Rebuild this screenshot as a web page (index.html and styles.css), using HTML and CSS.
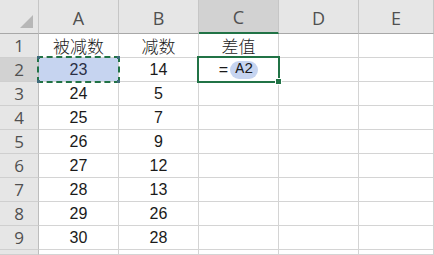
FILE: index.html
```html
<!DOCTYPE html>
<html lang="zh">
<head>
  <meta charset="UTF-8">
  <title>差值</title>
  <link rel="stylesheet" href="styles.css">
</head>
<body>
  <div class="sheet">
    <div class="corner"></div>
    <div class="col-head">A</div>
    <div class="col-head">B</div>
    <div class="col-head active">C</div>
    <div class="col-head">D</div>
    <div class="col-head">E</div>

    <div class="row-head">1</div>
    <div class="cell cjk">被减数</div>
    <div class="cell cjk">减数</div>
    <div class="cell cjk">差值</div>
    <div class="cell"></div>
    <div class="cell"></div>

    <div class="row-head active">2</div>
    <div class="cell copied">23<span class="marquee"><i class="dot tl"></i><i class="dot tr"></i><i class="dot bl"></i><i class="dot br"></i></span></div>
    <div class="cell">14</div>
    <div class="cell editing">=<span class="ref">A2</span><span class="selection"><span class="handle"></span></span></div>
    <div class="cell"></div>
    <div class="cell"></div>

    <div class="row-head">3</div>
    <div class="cell">24</div>
    <div class="cell">5</div>
    <div class="cell"></div>
    <div class="cell"></div>
    <div class="cell"></div>

    <div class="row-head">4</div>
    <div class="cell">25</div>
    <div class="cell">7</div>
    <div class="cell"></div>
    <div class="cell"></div>
    <div class="cell"></div>

    <div class="row-head">5</div>
    <div class="cell">26</div>
    <div class="cell">9</div>
    <div class="cell"></div>
    <div class="cell"></div>
    <div class="cell"></div>

    <div class="row-head">6</div>
    <div class="cell">27</div>
    <div class="cell">12</div>
    <div class="cell"></div>
    <div class="cell"></div>
    <div class="cell"></div>

    <div class="row-head">7</div>
    <div class="cell">28</div>
    <div class="cell">13</div>
    <div class="cell"></div>
    <div class="cell"></div>
    <div class="cell"></div>

    <div class="row-head">8</div>
    <div class="cell">29</div>
    <div class="cell">26</div>
    <div class="cell"></div>
    <div class="cell"></div>
    <div class="cell"></div>

    <div class="row-head">9</div>
    <div class="cell">30</div>
    <div class="cell">28</div>
    <div class="cell"></div>
    <div class="cell"></div>
    <div class="cell"></div>

    <div class="row-head"></div>
    <div class="cell"></div>
    <div class="cell"></div>
    <div class="cell"></div>
    <div class="cell"></div>
    <div class="cell"></div>
  </div>
</body>
</html>
```

FILE: styles.css
```css
html, body {
  margin: 0;
  padding: 0;
  background-color: #fff;
  overflow: hidden;
}
.sheet {
  display: grid;
  grid-template-columns: 39px repeat(4, 80px) 1fr;
  grid-template-rows: 34px repeat(9, 24px) 1fr;
  width: 434px;
  height: 255px;
  font-family: "Liberation Sans", "Noto Sans CJK SC", sans-serif;
}
.corner,
.col-head,
.row-head {
  box-sizing: border-box;
  background-color: #e6e6e6;
  color: #505050;
  display: flex;
  align-items: center;
  justify-content: center;
}
.corner {
  position: relative;
  border-right: 1px solid #c6c6c6;
  border-bottom: 1px solid #a8a8a8;
}
.corner::after {
  content: "";
  position: absolute;
  right: 5px;
  bottom: 5px;
  width: 0;
  height: 0;
  border-left: 13px solid transparent;
  border-bottom: 13px solid #b7b7b7;
}
.col-head {
  font-family: "Open Sans", "Liberation Sans", sans-serif;
  font-size: 18px;
  border-right: 1px solid #c6c6c6;
  border-bottom: 1px solid #a8a8a8;
  padding-top: 2px;
}
.col-head.active {
  background-color: #d2d2d2;
  border-bottom: 2px solid #217346;
}
.row-head {
  font-family: "Open Sans", "Liberation Sans", sans-serif;
  font-size: 17px;
  border-right: 1px solid #bdbdbd;
  border-bottom: 1px solid #cfcfcf;
}
.row-head.active {
  background-color: #d2d2d2;
}
.cell {
  box-sizing: border-box;
  position: relative;
  border-right: 1px solid #d4d4d4;
  border-bottom: 1px solid #d4d4d4;
  display: flex;
  align-items: center;
  justify-content: center;
  font-size: 16px;
  color: #1a1a1a;
}
.cjk {
  font-size: 17px;
  font-family: "Noto Sans CJK SC", sans-serif;
  font-weight: 300;
}
.copied {
  background-color: #c6d4f0;
  color: #2a2f45;
}
.marquee {
  position: absolute;
  top: -2px;
  left: -2px;
  right: -2px;
  bottom: -2px;
  border: 2px dashed #217346;
  z-index: 2;
}
.dot {
  position: absolute;
  width: 3px;
  height: 3px;
  background-color: #3d6b7a;
}
.dot.tl { top: -2px; left: -2px; }
.dot.tr { top: -2px; right: -2px; }
.dot.bl { bottom: -2px; left: -2px; }
.dot.br { bottom: -2px; right: -2px; }
.editing {
  gap: 2px;
}
.ref {
  background-color: #c6d4f0;
  border-radius: 9px;
  padding: 1px 5px;
  line-height: 16px;
  font-family: "Liberation Mono", monospace;
  font-size: 15px;
}
.selection {
  position: absolute;
  top: -2px;
  left: -2px;
  right: -2px;
  bottom: -2px;
  border: 2px solid #217346;
  z-index: 3;
}
.handle {
  position: absolute;
  right: -4px;
  bottom: -4px;
  width: 5px;
  height: 5px;
  background-color: #217346;
  border: 1px solid #fff;
}
```
